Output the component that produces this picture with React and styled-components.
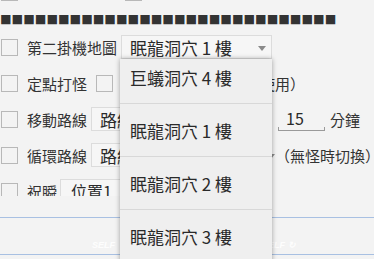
import React from 'react';
import styled, { createGlobalStyle } from 'styled-components';

const GlobalStyle = createGlobalStyle`
  html, body {
    margin: 0;
    padding: 0;
    background: #f3f3f3;
  }
  body {
    font-family: "Noto Sans CJK TC", "Noto Sans", sans-serif;
    color: #2f2f2f;
  }
`;

const Screen = styled.div`
  position: relative;
  width: 374px;
  height: 259px;
  overflow: hidden;
  background: #f3f3f3;
  display: flex;
  flex-direction: column;
`;

const Scroller = styled.div`
  height: 196px;
  flex: none;
  overflow: hidden;
`;

const Content = styled.div`
  margin-top: -26px;
  display: flex;
  flex-direction: column;
`;

const Row = styled.div`
  height: 36px;
  display: flex;
  align-items: center;
  white-space: nowrap;
`;

const Divider = styled.div`
  height: 19px;
  display: flex;
  align-items: center;
  font-size: 11.6px;
  line-height: 1;
  color: #333;
  overflow: hidden;
  white-space: nowrap;
`;

const Check = styled.span`
  flex: none;
  box-sizing: border-box;
  width: 17px;
  height: 17px;
  border: 1px solid #b8b8b8;
  margin-left: ${p => p.$ml ?? 1}px;
  margin-right: ${p => p.$mr ?? 9}px;
`;

const Label = styled.span`
  font-size: 15px;
  color: #333;
`;

const Hint = styled.span`
  font-size: 15px;
  color: #333;
  margin-left: ${p => p.$ml || 0}px;
`;

const Box = styled.div`
  flex: none;
  box-sizing: border-box;
  display: flex;
  align-items: center;
  position: relative;
  height: 24px;
  width: ${p => p.$w}px;
  margin-left: ${p => p.$ml || 0}px;
  padding-left: ${p => p.$pl || 8}px;
  border: 1px solid #dcdcdc;
  background: #f6f6f6;
  font-size: ${p => p.$fs || 17}px;
  color: #2a2a2a;
`;

const Arrow = styled.span`
  position: absolute;
  right: ${p => p.$r ?? 5}px;
  top: 10px;
  width: 0;
  height: 0;
  border-left: 4px solid transparent;
  border-right: 4px solid transparent;
  border-top: 5px solid #8a8a8a;
`;

const Edit = styled.div`
  flex: none;
  position: relative;
  box-sizing: border-box;
  width: 47px;
  height: 24px;
  margin-left: ${p => p.$ml || 0}px;
  padding-left: 8px;
  font-size: 16px;
  line-height: 22px;
  color: #2a2a2a;
  border-bottom: 1px solid #9a9a9a;

  &:before,
  &:after {
    content: '';
    position: absolute;
    bottom: 0;
    width: 1px;
    height: 3px;
    background: #9a9a9a;
  }
  &:before { left: 0; }
  &:after { right: 0; }
`;

const Unit = styled.span`
  font-size: 15px;
  color: #333;
  margin-left: 5px;
`;

const Footer = styled.div`
  flex: 1;
  position: relative;
`;

const Band = styled.div`
  position: relative;
  margin-top: 21px;
  height: 36px;
  border-top: 1px solid #a8c0e2;
  border-bottom: 1px solid #a8c0e2;
`;

const Ghost = styled.span`
  position: absolute;
  left: ${p => p.$x}px;
  top: 22px;
  font-family: "Liberation Sans", sans-serif;
  font-size: 9px;
  font-weight: bold;
  font-style: italic;
  color: rgba(255, 255, 255, 0.9);
`;

const Menu = styled.div`
  position: absolute;
  left: 120px;
  top: 59px;
  width: 152px;
  bottom: -20px;
  background: #efefef;
  box-shadow: 0 0 5px rgba(0, 0, 0, 0.35);
  overflow: hidden;
`;

const MenuList = styled.div`
  margin-top: -8px;
  display: flex;
  flex-direction: column;
`;

const MenuItem = styled.div`
  height: 52px;
  display: flex;
  align-items: center;
  padding-left: 10px;
  font-size: 17px;
  color: #2a2a2a;
  border-bottom: 1px solid #d8d8d8;
  white-space: nowrap;
`;

const squares = '■'.repeat(29);

const options = ['巨蟻洞穴 4 樓', '眠龍洞穴 1 樓', '眠龍洞穴 2 樓', '眠龍洞穴 3 樓', '眠龍洞穴 4 樓'];

export default function App() {
  return (
    <>
      <GlobalStyle />
      <Screen>
        <Scroller>
          <Content>
            <Row>
              <Check />
              <Check $ml={98} />
            </Row>
            <Divider>{squares}</Divider>
            <Row>
              <Check />
              <Label>第二掛機地圖</Label>
              <Box $w={151} $ml={4}>
                眠龍洞穴 1 樓
                <Arrow />
              </Box>
            </Row>
            <Row>
              <Check />
              <Label>定點打怪</Label>
              <Check $ml={9} $mr={0} />
              <Hint $ml={117}>（不使用）</Hint>
            </Row>
            <Row>
              <Check />
              <Label>移動路線</Label>
              <Box $w={100} $ml={4}>路線1</Box>
              <Edit $ml={87}>15</Edit>
              <Unit>分鐘</Unit>
            </Row>
            <Row>
              <Check />
              <Label>循環路線</Label>
              <Box $w={181} $ml={4}>
                路線1
                <Arrow $r={-4} />
              </Box>
              <Hint $ml={3}>（無怪時切換）</Hint>
            </Row>
            <Row>
              <Check />
              <Label>祝瞬</Label>
              <Box $w={120} $ml={3} $pl={10} $fs={16}>位置1</Box>
            </Row>
          </Content>
        </Scroller>
        <Footer>
          <Band>
            <Ghost $x={92}>SELF</Ghost>
            <Ghost $x={262}>SELF ↻</Ghost>
          </Band>
        </Footer>
        <Menu>
          <MenuList>
            {options.map(o => (
              <MenuItem key={o}>{o}</MenuItem>
            ))}
          </MenuList>
        </Menu>
      </Screen>
    </>
  );
}
